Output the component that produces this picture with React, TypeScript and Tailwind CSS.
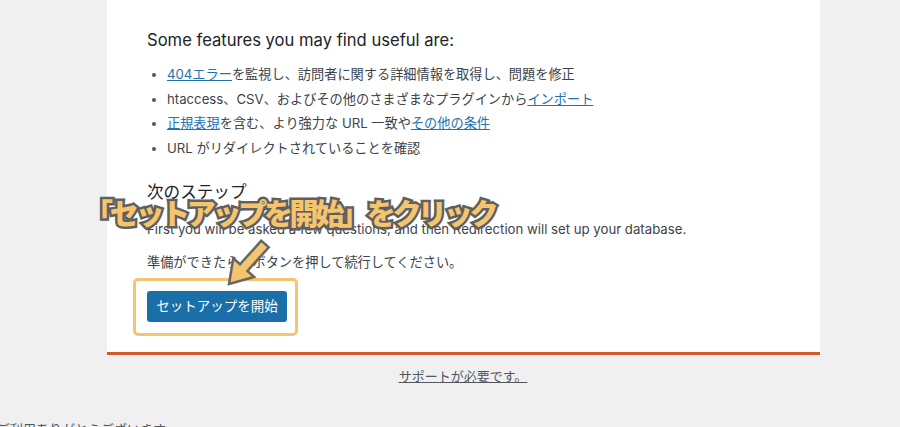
import React from "react";

const font = { fontFamily: '"Inter", "Noto Sans CJK JP", sans-serif' };

export default function App() {
  return (
    <div
      className="relative h-[427px] w-[900px] overflow-hidden bg-[#f0f0f1] text-[#3c434a]"
      style={font}
    >
      <div className="relative ml-[107px] w-[713px] border-b-[3px] border-[#cf5b2c] bg-white pl-[40px] pr-[40px] pt-[27px] pb-[30px]">
        <h2 className="text-[16.6px] leading-[27px] text-[#1d2327]">
          Some features you may find useful are:
        </h2>
        <ul className="mt-[8px] list-disc pl-[20px] text-[13.2px] leading-[24.7px] marker:text-[#50575e]">
          <li>
            <a className="text-[#2271b1] underline">404エラー</a>
            を監視し、訪問者に関する詳細情報を取得し、問題を修正
          </li>
          <li>
            htaccess、CSV、およびその他のさまざまなプラグインから
            <a className="text-[#2271b1] underline">インポート</a>
          </li>
          <li>
            <a className="text-[#2271b1] underline">正規表現</a>
            を含む、より強力な URL 一致や
            <a className="text-[#2271b1] underline">その他の条件</a>
          </li>
          <li>URL がリダイレクトされていることを確認</li>
        </ul>
        <h2 className="mt-[18px] text-[16.6px] leading-[27px] text-[#1d2327]">
          次のステップ
        </h2>
        <p className="mt-[13px] text-[13.2px] leading-[21px]">
          First you will be asked a few questions, and then Redirection will set
          up your database.
        </p>
        <p className="mt-[12px] text-[13.2px] leading-[21px]">
          準備ができたら、ボタンを押して続行してください。
        </p>
        <div className="relative mt-[18px] w-[140px]">
          <div className="absolute left-[-14px] top-[-13px] h-[58px] w-[165px] rounded-[5px] border-[3px] border-[#f5c46e]" />
          <button className="relative flex h-[31px] w-[140px] items-center justify-center rounded-[3px] bg-[#1a6fa8] text-[13.5px] text-white">
            セットアップを開始
          </button>
        </div>

        {/* annotation */}
        <div
          className="absolute left-[-23px] top-[195px] whitespace-nowrap text-[29px] font-black leading-[34px] tracking-[-3.3px] text-[#f5c46e] [-webkit-text-stroke:5px_#5f5f5f] [paint-order:stroke_fill]"
          style={{ fontFamily: '"Noto Sans CJK JP", sans-serif' }}
        >
          「セットアップを開始」をクリック
        </div>
        <svg
          className="absolute left-[98px] top-[238px]"
          width="70"
          height="60"
          viewBox="0 0 70 60"
        >
          <polygon
            points="56.3,2.66 35,26.3 28.32,20.28 24,46 49.12,39.02 42.44,33 63.7,9.35"
            fill="#f5c46e"
            stroke="#666666"
            strokeWidth="2.5"
            strokeLinejoin="miter"
          />
        </svg>
      </div>
      <div className="mt-[12px] flex w-[900px] justify-center pl-[26px]">
        <a className="text-[13px] leading-[18px] text-[#50575e] underline">
          サポートが必要です。
        </a>
      </div>
      <div className="absolute left-[-3px] top-[420px] text-[13px] leading-[18px] text-[#50575e]">
        ご利用ありがとうございます。
      </div>
    </div>
  );
}
